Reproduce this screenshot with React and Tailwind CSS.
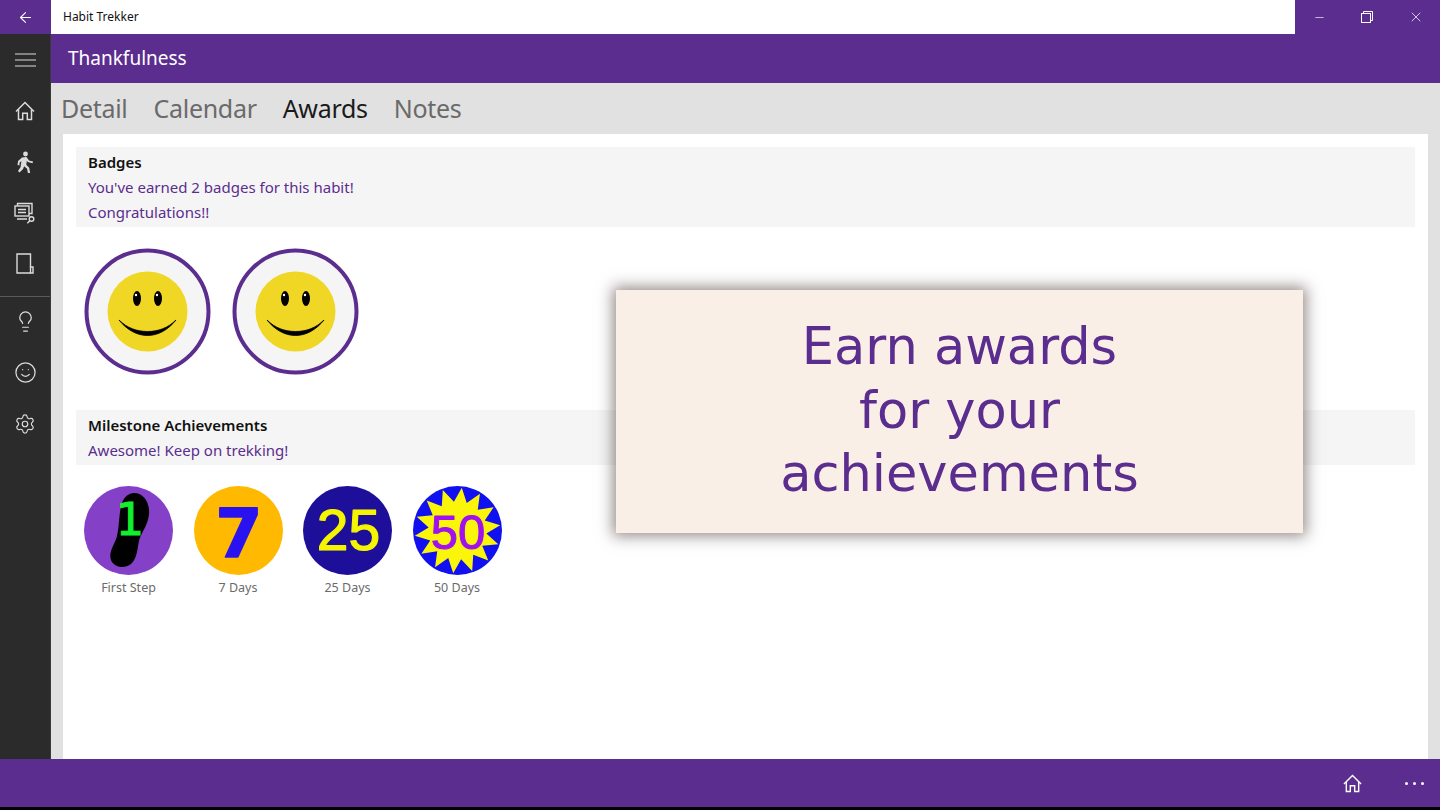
import { ArrowLeft, Minus, X, Lightbulb, Smile, Settings } from 'lucide-react'

const ui = 'font-["Noto_Sans","Open_Sans",sans-serif]'

function HomeIcon({ size = 20 }) {
  return (
    <svg width={size} height={size} viewBox="0 0 20 20" fill="none" stroke="currentColor" strokeWidth="1.5">
      <path d="M1 10.5 10 1.5l9 9" />
      <path d="M3.5 8.5v10h4.2v-6.2h4.6v6.2h4.2v-10" />
    </svg>
  )
}

function Walker() {
  return (
    <svg width="20" height="22" viewBox="0 0 20 22" fill="currentColor">
      <circle cx="10.5" cy="3" r="2.4" />
      <path d="M7 6.5 11.5 6l2.5 3.5 4 1-.4 1.7-4.8-1.2-1-1.2-.5 4 2.9 3 .9 5.2h-2.2l-.8-4.3-3-2.4-1 2.8L4.5 21.500 3 20l2.500-3.800.9-6-1.600 1.100-.5 3.200L2.500 14l.6-4z" />
    </svg>
  )
}

function ScreenSearch() {
  return (
    <svg width="22" height="22" viewBox="0 0 22 22" fill="none" stroke="currentColor" strokeWidth="1.4">
      <rect x="1" y="4" width="14" height="10" />
      <path d="M3.500 4V1.500h14.500v10H15" />
      <path d="M4 7.500h8M4 10.500h8M3 17h10" />
      <circle cx="17.500" cy="17" r="2.300" />
      <path d="m15.800 18.800-2.500 2.500" />
    </svg>
  )
}

function Notebook() {
  return (
    <svg width="18" height="21" viewBox="0 0 18 21" fill="none" stroke="currentColor" strokeWidth="1.4">
      <path d="M14.500 14V1H1v19h13.500" />
      <path d="M14.500 14h2.500v6h-2.500z" />
    </svg>
  )
}

function SideItem({ children, className = '' }) {
  return <div className={`h-[51px] flex items-center justify-center text-[#dcdcdc] ${className}`}>{children}</div>
}

function SmileBadge() {
  return (
    <svg width="127" height="127" viewBox="0 0 127 127" className="shrink-0">
      <circle cx="63.500" cy="63.500" r="61" fill="#f5f5f5" stroke="#5b2d8e" strokeWidth="4" />
      <circle cx="63.500" cy="63.500" r="40" fill="#f0d625" />
      <ellipse cx="53" cy="50.500" rx="4" ry="7.500" fill="#000" />
      <ellipse cx="74" cy="50.500" rx="4" ry="7.500" fill="#000" />
      <circle cx="52" cy="47" r="1.200" fill="#fff" />
      <circle cx="73" cy="47" r="1.200" fill="#fff" />
      <path d="M35 72c8 10 18 15.500 28.500 15.500S84 82 92 72c-8 8-18 11.500-28.500 11.500S43 80 35 72z" fill="#000" stroke="#000" strokeWidth="0.8" />
    </svg>
  )
}

const starPoints = Array.from({ length: 28 }, (_, i) => {
  const a = (i * Math.PI) / 14 - Math.PI / 2 + 0.1
  const r = i % 2 === 0 ? 43 : 29
  return `${44.5 + r * Math.cos(a)},${44.5 + r * Math.sin(a)}`
}).join(' ')

function Milestone({ label, children }) {
  return (
    <div className="w-[89px] flex flex-col items-center">
      <svg width="89" height="89" viewBox="0 0 89 89">{children}</svg>
      <span className="mt-[4px] text-[12.500px] leading-[18px] text-[#6b6b6b] whitespace-nowrap">{label}</span>
    </div>
  )
}

export default function App() {
  return (
    <div className={`relative h-[810px] w-[1440px] overflow-hidden flex flex-col bg-black ${ui}`}>
      {/* title bar */}
      <div className="h-[34px] flex shrink-0">
        <div className="w-[51px] bg-[#5b2d8e] flex items-center justify-center text-white">
          <ArrowLeft size={17} strokeWidth={1.5} />
        </div>
        <div className="flex-1 bg-white flex items-center pl-[12px] text-[12px] text-[#111]">Habit Trekker</div>
        <div className="w-[145px] bg-[#5b2d8e] flex items-center text-white">
          <div className="w-[48px] flex justify-center"><Minus size={13} strokeWidth={1.2} /></div>
          <div className="w-[48px] flex justify-center">
            <svg width="12" height="12" viewBox="0 0 12 12" fill="none" stroke="currentColor">
              <rect x="0.500" y="2.500" width="9" height="9" />
              <path d="M2.500 2.500v-2h9v9h-2" />
            </svg>
          </div>
          <div className="w-[49px] flex justify-center"><X size={16} strokeWidth={1.1} /></div>
        </div>
      </div>

      <div className="flex-1 flex min-h-0">
        {/* sidebar */}
        <div className="w-[51px] shrink-0 bg-[#2b2b2b] border-r border-[#3a3a3a] flex flex-col">
          <SideItem>
            <svg width="21" height="14" viewBox="0 0 21 14" stroke="#dcdcdc" strokeWidth="1.200">
              <path d="M0 1h21M0 7h21M0 13h21" />
            </svg>
          </SideItem>
          <SideItem><HomeIcon /></SideItem>
          <SideItem><Walker /></SideItem>
          <SideItem><ScreenSearch /></SideItem>
          <SideItem><Notebook /></SideItem>
          <div className="mt-[7px] border-t border-[#5a5a5a]" />
          <SideItem className="-mt-px"><Lightbulb size={23} strokeWidth={1.300} /></SideItem>
          <SideItem><Smile size={23} strokeWidth={1.300} /></SideItem>
          <SideItem><Settings size={22} strokeWidth={1.300} /></SideItem>
        </div>

        <div className="flex-1 flex flex-col min-w-0">
          <div className="h-[49px] shrink-0 bg-[#5b2d8e] flex items-center pl-[17px] text-[19px] text-white">Thankfulness</div>

          <div className="flex-1 bg-[#e1e1e1] flex flex-col min-h-0">
            {/* tabs */}
            <div className="h-[51px] shrink-0 flex items-center pl-[10px] gap-[26px] text-[25px] tracking-[-0.3px] text-[#6a6a6a]">
              <span>Detail</span>
              <span>Calendar</span>
              <span className="text-[#1a1a1a]">Awards</span>
              <span>Notes</span>
            </div>

            <div className="flex-1 mx-[12px] mb-0 bg-white px-[13px] pt-[13px]">
              <div className="h-[80px] bg-[#f5f5f5] pl-[12px] pt-[3px] text-[15px] leading-[25px] text-[#5b2d8e]">
                <div className="font-semibold text-[#111]">Badges</div>
                <div>You've earned 2 badges for this habit!</div>
                <div>Congratulations!!</div>
              </div>

              <div className="flex gap-[21px] pl-[8px] pt-[21px]">
                <SmileBadge />
                <SmileBadge />
              </div>

              <div className="mt-[35px] h-[55px] bg-[#f5f5f5] pl-[12px] pt-[3px] text-[15px] leading-[25px] text-[#5b2d8e]">
                <div className="font-semibold text-[#111]">Milestone Achievements</div>
                <div>Awesome! Keep on trekking!</div>
              </div>

              <div className="flex gap-[20.500px] pl-[8px] pt-[21px]">
                <Milestone label="First Step">
                  <circle cx="44.500" cy="44.500" r="44.500" fill="#8540c8" />
                  <path d="M50 7C60 7 66 17 65 28 64 40 57 46 55 55 53 65 53 72 47 78 41 83 30 82 27 74 24 66 31 58 33 50 35 42 35 30 37 20 39 12 44 7 50 7Z" fill="#000" />
                  <text x="46" y="49" textAnchor="middle" fontSize="44" fontFamily="DejaVu Sans" fill="#10f030" stroke="#10f030" strokeWidth="1">1</text>
                </Milestone>
                <Milestone label="7 Days">
                  <circle cx="44.500" cy="44.500" r="44.500" fill="#ffb900" />
                  <text x="45" y="71" textAnchor="middle" fontSize="68" fontWeight="700" fontFamily="DejaVu Sans" fill="#2a12f0" stroke="#2a12f0" strokeWidth="1.500" strokeLinejoin="round">7</text>
                </Milestone>
                <Milestone label="25 Days">
                  <circle cx="44.500" cy="44.500" r="44.500" fill="#1e0f9a" />
                  <text x="45.500" y="64" textAnchor="middle" fontSize="57" fontFamily="Liberation Sans" fill="#f5f500" stroke="#f5f500" strokeWidth="1.200" strokeLinejoin="round">25</text>
                </Milestone>
                <Milestone label="50 Days">
                  <circle cx="44.500" cy="44.500" r="44.500" fill="#1010f0" />
                  <polygon points={starPoints} fill="#fbf50a" />
                  <text x="45" y="63" textAnchor="middle" fontSize="49" fontFamily="Liberation Sans" fill="#a010f0" stroke="#a010f0" strokeWidth="1" strokeLinejoin="round">50</text>
                </Milestone>
              </div>
            </div>
          </div>
        </div>
      </div>

      {/* bottom app bar */}
      <div className="h-[48px] mb-[3px] shrink-0 bg-[#5b2d8e] flex items-center justify-end text-white">
        <HomeIcon size={19} />
        <div className="ml-[43px] mr-[16px] flex gap-[5px]">
          <span className="w-[3px] h-[3px] rounded-full bg-white" />
          <span className="w-[3px] h-[3px] rounded-full bg-white" />
          <span className="w-[3px] h-[3px] rounded-full bg-white" />
        </div>
      </div>

      {/* promo caption over the screen */}
      <div className="absolute left-[616px] top-[290px] w-[687px] h-[243px] bg-[#f9efe6] shadow-[0_0_14px_3px_rgba(60,40,40,0.55)] flex flex-col items-center justify-center pb-[2px] text-[51px] leading-[63.500px] text-[#5b2d8e] font-['DejaVu_Sans',sans-serif]">
        <div>Earn awards</div>
        <div>for your</div>
        <div>achievements</div>
      </div>
    </div>
  )
}
